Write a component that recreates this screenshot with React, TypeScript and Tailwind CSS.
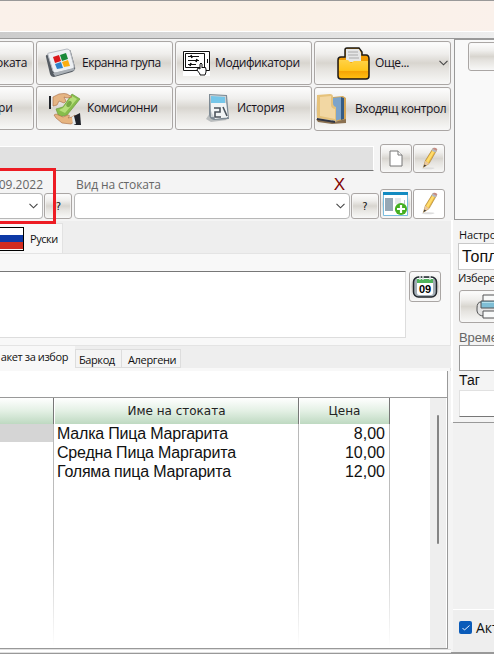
import type { ReactNode } from 'react';

const steel = 'border border-[#aaa6a4] rounded-[3px] bg-[linear-gradient(180deg,#fdfdfd_0%,#efeeec_28%,#d8d5cf_50%,#e5e3df_65%,#f8f8f7_100%)] shadow-[inset_0_0_0_1px_#f8f8f8aa]';

function ToolButton({ children, className = '' }: { children?: ReactNode; className?: string }) {
  return (
    <button className={`${steel} flex h-11 shrink-0 items-center whitespace-nowrap text-left font-['Open_Sans','Noto_Sans',sans-serif] text-[12px] text-[#17121c] ${className}`}>
      {children}
    </button>
  );
}

function SmallButton({ children, className = '' }: { children?: ReactNode; className?: string }) {
  return <button className={`${steel} flex shrink-0 items-center justify-center ${className}`}>{children}</button>;
}

function Chevron() {
  return (
    <svg width="9" height="6" viewBox="0 0 9 6" fill="none" stroke="#444" strokeWidth="1.1">
      <path d="M.5 .8 4.5 4.8 8.5 .8" />
    </svg>
  );
}

function TilesIcon() {
  return (
    <svg width="31" height="31" viewBox="0 0 31 31">
      <path d="M1 9 5 26q1 3 4 3l18-5q4-2 3-5L26 4q0-3-4-2L4 6Q0 7 1 9" fill="#555b62" />
      <path d="M3 7 8 23q1 2 3 2l16-4q3-1 2-3L25 3q-1-2-3-2L4 5Q2 5 3 7" fill="#edf0f3" stroke="#b6bac1" />
      <path d="m8 9 6-2 2 6-6 2Z" fill="#db171b" />
      <path d="m15 7 6-2 2 6-6 2Z" fill="#198939" />
      <path d="m10 16 6-2 2 6-6 1Z" fill="#2e82c9" />
      <path d="m17 14 6-2 2 6-6 1Z" fill="#fbae10" />
      <path d="M8 25 29 20l1 2-20 6" fill="#aab0b6" />
    </svg>
  );
}

function MoneyIcon() {
  return (
    <svg width="33" height="33" viewBox="0 0 33 33">
      <path d="m8 17 7-2 9-13 8 5-13 16-8 2Z" fill="#88bd4c" stroke="#6b9b39" strokeWidth=".7" />
      <path d="m11 18 4-2 9-12 5 3-12 14Z" fill="#b6de7a" />
      <ellipse cx="21" cy="12" rx="2.2" ry="3.4" fill="#78a845" transform="rotate(35 21 12)" />
      <path d="M1 4h2v13H1z" fill="#202329" />
      <path d="M3 5h2v10H3z" fill="#e5e9eb" />
      <path d="m5 5 6-3q6-1 8 0l5 3-5 1-3-1 2 4-2 2-5-2-2 4-4 1Z" fill="#e5b584" stroke="#a76a40" strokeWidth=".6" />
      <path d="m6 23 2-1 7 3 5-2q3 0 0 3l4-1 3-2 2 5-6 4-9-1-6-5Z" fill="#e6b480" stroke="#a76a40" strokeWidth=".6" />
      <path d="m26 24 6-3 1 12h-7Z" fill="#20232a" />
      <path d="m24 25 2-1 2 8-3 1Z" fill="#e5ebee" />
    </svg>
  );
}

function ModifierIcon() {
  return (
    <svg width="27" height="27" viewBox="0 0 27 27" fill="none" stroke="#111" strokeWidth="1">
      <path d="M0 0h27v26H0z" fill="#fff" stroke="none" />
      <path d="M.5 1.5h26v19H.5zM2.5 3.5h19v14h-19zM5 6.5h11M5 10.5h11M5 14.5h8M24.5 9v4" />
      <path d="m8 5 1 3m5 1-1 3m-5 1-1 3" strokeWidth="1.6" />
      <path d="m17 24-3-4 1-2 2 1v-5q1-2 2 0v4l1-1 1 1 1-1 1 2v3l-1 3h-5Z" fill="#fff" />
    </svg>
  );
}

function HistoryIcon() {
  return (
    <svg width="28" height="30" viewBox="0 0 28 30">
      <path d="m1 26 6-9 15 10-16 2Z" fill="#babdbe" />
      <path d="m4 1 18 1 2 24-15 1Q4 26 4 21Z" fill="#7d8a94" />
      <path d="m5 2 16 1 1 22-16-1Z" fill="#cbd1d4" />
      <path d="m6 3 14 1v6H6Z" fill="#75c6e9" />
      <path d="M6 10h15l2 14-13 2-4-8Z" fill="#f1f4f5" />
      <path d="M9 15h6v4h-5v5h6m2-10 4 9" fill="none" stroke="#4b535c" strokeWidth="1.6" />
    </svg>
  );
}

function FolderIcon() {
  return (
    <svg width="33" height="33" viewBox="0 0 33 33">
      <defs><linearGradient id="folderFront" x2="0" y2="1"><stop stopColor="#ffd247" /><stop offset=".58" stopColor="#ffc51c" /><stop offset=".62" stopColor="#f6a404" /><stop offset="1" stopColor="#ffbd11" /></linearGradient></defs>
      <path d="M1 29V13q0-3 3-3h4V3q0-2 2-2h12l3 4v3h4q3 0 3 4v17q0 3-3 3H4q-3 0-3-3Z" fill="#f19b00" stroke="#1c1a17" strokeWidth="1.5" />
      <path d="M9 2h13l2 4v9H9Z" fill="#e5e6e6" />
      <path d="M11 5h10M11 8h10M12 11h10" stroke="#aaa" />
      <path d="M2 13h9l3 3 3-2h14v15q0 2-3 2H5q-3 0-3-3Z" fill="url(#folderFront)" />
    </svg>
  );
}

function BooksIcon() {
  return (
    <svg width="32" height="32" viewBox="0 0 32 32">
      <path d="m17 4 10-1 3 2v22L17 29Z" fill="#d4a657" />
      <path d="m16 5 9-1v22l-9 3Z" fill="#7da4ca" />
      <path d="m25 4 3 1v21l-3 1Z" fill="#345c85" />
      <path d="M0 26 18 29l12-3v4l-14 1-14-2Z" fill="#8b7151" />
      <path d="m1 2 13-1q3 0 3 3v6q0 3 3 4v14L1 25Z" fill="#e6c27b" />
      <path d="m4 4 11-1v9q0 3 4 4v10L4 23Z" fill="#f6ddb0" opacity=".75" />
      <path d="m1 25 18 3v2L1 27Z" fill="#303543" />
    </svg>
  );
}

function PencilIcon() {
  return (
    <svg width="24" height="24" viewBox="0 0 26 26">
      <ellipse cx="12" cy="23" rx="7" ry="1" fill="#ddd" />
      <path d="m7 22 2-7 8-13 4 2-8 14Z" fill="#edbd43" stroke="#a67e36" strokeWidth=".7" />
      <path d="m10 15 8-13 2 1-8 14Z" fill="#ffdc6c" />
      <path d="m7 22 2-7 4 3Z" fill="#eac8a0" />
      <path d="m7 22 1-3 2 1Z" fill="#333" />
      <path d="m16 4 1-3q3-1 5 2l-2 3Z" fill="#b4bac2" />
      <path d="m17 2 1-1q3-1 4 2l-1 1Z" fill="#c78b81" />
    </svg>
  );
}

function FormPlusIcon() {
  return (
    <svg width="26" height="25" viewBox="0 0 26 25">
      <path d="M.5.5h24v23H.5z" fill="#fff" stroke="#79bddf" />
      <path d="M0 0h25v3H0z" fill="#138bc1" />
      <path d="M2 6h8v13H2z" fill="#96a8b5" />
      <path d="M12 6h6v6h-6z" fill="#e6e9eb" />
      <path d="M21 8h1v4h-1z" fill="#b8c3c8" />
      <circle cx="18" cy="17" r="6.1" fill="#45af21" />
      <path d="M18 13v8m-4-4h8" stroke="#fff" strokeWidth="2.2" />
    </svg>
  );
}

function CalendarIcon() {
  return (
    <div className="relative h-[24px] w-[26px]">
      <svg className="absolute inset-0" width="26" height="24" viewBox="0 0 26 24">
        <rect x="1.5" y="2" width="23" height="20" rx="5" fill="#a4afb6" stroke="#20262b" strokeWidth="1.5" />
        <path d="M5 3h16v15q0 2-2 2H7q-2 0-2-2Z" fill="#fff" />
        <path d="M5 4h16v4H5z" fill="#50b45c" />
        <path d="M8 1v4m3-4v4m7-4v4" stroke="#d8e1dd" strokeWidth="1.5" />
      </svg>
      <span className="absolute left-[7px] top-[9px] font-['Liberation_Sans',sans-serif] text-[11px] font-bold leading-[10px] text-black">09</span>
    </div>
  );
}

function PrinterIcon() {
  return (
    <svg className="shrink-0" width="32" height="26" viewBox="0 0 32 26" fill="#f9fafa" stroke="#525354" strokeWidth="1">
      <path d="M5 8Q1 8 1 14v3q1 5 7 5h17l4-4V8Z" fill="#e3e3e3" />
      <path d="M7 1h17v8H7z" />
      <path d="M5 7h22v7H5z" fill="#7fbed5" />
      <path d="M6 8h20v1H6z" fill="#b4dfeb" stroke="none" />
      <path d="M7 17h18v7H7z" />
    </svg>
  );
}

const products = [
  ['Малка Пица Маргарита', '8,00'],
  ['Средна Пица Маргарита', '10,00'],
  ['Голяма пица Маргарита', '12,00'],
];

const headerStyle = "h-[26px] shrink-0 border-r border-[#777] bg-[linear-gradient(180deg,#fff_0%,#e3f0e4_50%,#bed9c1_100%)] text-center font-['DejaVu_Sans',sans-serif] text-[12px] leading-[27px] text-[#222]";

function FadeLine() {
  return <div className="ml-auto h-full w-px shrink-0 bg-[linear-gradient(180deg,#b9b9b9_0%,#bdbdbd_50%,#fff_100%)]" />;
}

function Toolbar() {
  return (
    <div className="flex h-[92px] gap-0.5 pt-0.5">
      <div className="flex w-[34px] shrink-0 flex-col gap-px overflow-hidden">
        <ToolButton className="-ml-4 w-[50px] justify-end pr-[6px] tracking-[-.3px]">оката</ToolButton>
        <ToolButton className="-ml-4 w-[50px] justify-end pr-[20px]">ри</ToolButton>
      </div>
      <div className="flex w-[137px] shrink-0 flex-col gap-px">
        <ToolButton className="w-full pl-[8px]"><TilesIcon /><span className="ml-[6px] tracking-[-.45px]">Екранна група</span></ToolButton>
        <ToolButton className="w-full pl-[11px]"><MoneyIcon /><span className="ml-[6px] tracking-[-.4px]">Комисионни</span></ToolButton>
      </div>
      <div className="flex w-[137px] shrink-0 flex-col gap-px">
        <ToolButton className="w-full pl-[7px]"><ModifierIcon /><span className="ml-[5px] tracking-[-.4px]">Модификатори</span></ToolButton>
        <ToolButton className="w-full pl-[29px]"><HistoryIcon /><span className="ml-[4px] tracking-[-.3px]">История</span></ToolButton>
      </div>
      <div className="flex w-[137px] shrink-0 flex-col gap-0.5">
        <ToolButton className="w-full pl-[22px]"><FolderIcon /><span className="ml-[5px] flex-1 tracking-[-.4px]">Още...</span><span className="mr-[2px]"><Chevron /></span></ToolButton>
        <ToolButton className="w-full pl-[1px]"><BooksIcon /><span className="ml-[7px] tracking-[-.4px]">Входящ контрол</span></ToolButton>
      </div>
    </div>
  );
}

function ProductFields() {
  return (
    <div className="flex h-[90px] flex-col bg-[#f4f4f4] pt-[13px]">
      <div className="flex h-[30px] shrink-0">
        <div className="mt-[2px] h-[25px] w-[374px] border-y border-r border-b-[#777] border-r-white border-t-white bg-[#e1e1e1]" />
        <SmallButton className="ml-[6px] h-[29px] w-8">
          <svg width="14" height="17" viewBox="0 0 14 17" fill="#fff" stroke="#777"><path d="M1 1h8l4 4v11H1Z" /><path d="M9 1v4h4" /></svg>
        </SmallButton>
        <SmallButton className="ml-px h-[29px] w-8"><PencilIcon /></SmallButton>
      </div>
      <div className="flex h-[47px]">
        <div className="w-[73px] shrink-0">
          <div className="flex h-[19px] w-[43px] justify-end overflow-hidden font-['Open_Sans','Noto_Sans',sans-serif] text-[12px] leading-[21px] text-[#666]">09.2022</div>
          <div className="flex">
            <div className="flex h-[26px] w-[43px] items-center justify-end rounded-r-sm border border-l-0 border-[#b7b7b7] bg-white pr-1"><Chevron /></div>
            <SmallButton className="ml-px h-[26px] w-7"><span className="pl-px font-['DejaVu_Sans',sans-serif] text-[10px]">?</span></SmallButton>
          </div>
        </div>
        <div className="w-[278px] shrink-0 pl-px">
          <div className="flex h-[19px] justify-between pl-0.5 font-['Open_Sans','Noto_Sans',sans-serif] text-[12px] leading-[21px] tracking-[-.12px] text-[#666]">
            Вид на стоката<span className="mr-[6px] font-['Liberation_Sans',sans-serif] text-[17px] leading-[21px] text-[#800000]">X</span>
          </div>
          <div className="flex h-[26px] w-[276px] items-center justify-end rounded-sm border border-[#b7b7b7] bg-white pr-1"><Chevron /></div>
        </div>
        <SmallButton className="mt-[19px] h-[26px] w-7"><span className="font-['DejaVu_Sans',sans-serif] text-[10px]">?</span></SmallButton>
        <SmallButton className="ml-px mt-[15px] h-[30px] w-8"><FormPlusIcon /></SmallButton>
        <button className="ml-px mt-[15px] flex h-[30px] w-8 items-center justify-center rounded-[3px] border border-[#aaa6a4] bg-white"><PencilIcon /></button>
      </div>
    </div>
  );
}

function ProductTable() {
  return (
    <div className="mr-[3px] h-[278px] border-r border-b border-[#999] bg-white">
      <div className="h-[27px] border-b border-[#999]" />
      <div className="flex h-[250px]">
        <div className="w-[54px] shrink-0">
          <div className={`${headerStyle} w-[54px]`} />
          <div className="flex h-[223px]"><div className="h-[18px] w-[53px] bg-[#d5d5d5]" /><FadeLine /></div>
        </div>
        <div className="w-[245px] shrink-0">
          <div className={`${headerStyle} w-[245px] border-l border-l-white`}>Име на стоката</div>
          <div className="flex h-[223px] pl-[3px]">
            <div className="whitespace-nowrap font-['Liberation_Sans',sans-serif] text-[16px] leading-[19px] tracking-[-.2px]">{products.map(([name]) => <div key={name}>{name}</div>)}</div><FadeLine />
          </div>
        </div>
        <div className="w-[91px] shrink-0">
          <div className={`${headerStyle} w-[91px] border-l border-l-white`}>Цена</div>
          <div className="flex h-[223px]">
            <div className="w-[86px] text-right font-['Liberation_Sans',sans-serif] text-[16px] leading-[19px]">{products.map(([name, price]) => <div key={name}>{price}</div>)}</div><FadeLine />
          </div>
        </div>
        <div className="ml-auto mr-px w-4 bg-[#eee]"><div className="ml-[7px] mt-[17px] h-[129px] w-[2px] rounded-full bg-[#858585]" /></div>
      </div>
    </div>
  );
}

function MainPanel() {
  return (
    <main className="flex w-[451px] shrink-0 flex-col">
      <Toolbar />
      <ProductFields />
      <div className="flex h-8 bg-[#eee] pt-0.5">
        <div className="flex h-[30px] w-[63px] items-center border-r border-t border-[#e2e2e2] bg-[#f8f8f8]">
          <div className="flex h-6 w-6 flex-col border border-l-0 border-black"><i className="flex-1 bg-white" /><i className="flex-1 bg-[#0d39a6]" /><i className="flex-1 bg-[#d02b20]" /></div>
          <span className="ml-[6px] mt-[2px] font-['Open_Sans','Noto_Sans',sans-serif] text-[11px] tracking-[-.45px]">Руски</span>
        </div>
      </div>
      <div className="flex h-[93px] border-y border-r border-[#e4e4e4] bg-[#f8f8f8] pt-[17px]">
        <div className="h-[67px] w-[406px] border border-l-0 border-t-[#777] border-[#ddd] bg-white" />
        <SmallButton className="ml-[3px] h-[31px] w-8"><CalendarIcon /></SmallButton>
      </div>
      <div className="flex h-[22px] items-end bg-[#eee] font-['Open_Sans','Noto_Sans',sans-serif] text-[11px]">
        <div className="h-[22px] w-[75px] overflow-hidden bg-[#f8f8f8] pr-[7px] text-right leading-[21px]"><span className="float-right whitespace-nowrap tracking-[-.4px]">акет за избор</span></div>
        <div className="h-[19px] w-[47px] border border-[#ddd] bg-[#f4f4f4] pl-[3px] leading-[19px] tracking-[-.4px]">Баркод</div>
        <div className="h-[19px] w-[59px] border border-l-0 border-[#ddd] bg-[#f4f4f4] pl-[6px] leading-[19px] tracking-[-.35px]">Алергени</div>
      </div>
      <div className="h-[3px] shrink-0 border-r border-[#ddd] bg-[#f8f8f8]" />
      <ProductTable />
      <div className="h-1 border-y border-[#e1e1e1] bg-white" />
      <div className="h-px bg-[#999]" />
    </main>
  );
}

function SettingsPanel() {
  return (
    <aside className="flex h-[615px] w-[43px] shrink-0 flex-col overflow-hidden bg-[#f4f4f4]">
      <div className="ml-[3px] h-[181px] shrink-0 border-b border-l border-t border-[#999] bg-[#f9f9f9] pl-[13px] pt-[2px]">
        <SmallButton className="h-[29px] w-[70px]" />
      </div>
      <div className="h-[202px] shrink-0 border-l-2 border-white pl-[5px]">
        <div className="h-[23px] whitespace-nowrap pl-px pt-[5px] font-['Open_Sans','Noto_Sans',sans-serif] text-[11px] leading-[20px] tracking-[-.15px]">Настройки</div>
        <div className="h-[27px] w-[90px] border border-[#c8c8c8] bg-white pl-[3px] font-['Liberation_Sans',sans-serif] text-[16px] leading-[25px]">Топли</div>
        <div className="h-[20px] whitespace-nowrap font-['Open_Sans','Noto_Sans',sans-serif] text-[11px] leading-[16px] tracking-[-.3px]">Изберете</div>
        <SmallButton className="ml-px h-[33px] w-[70px] !justify-start pl-[16px]"><PrinterIcon /></SmallButton>
        <div className="h-[22px] whitespace-nowrap pl-px font-['Liberation_Sans',sans-serif] text-[13px] leading-[30px] tracking-[-.1px] text-[#666]">Време</div>
        <div className="ml-px h-[26px] w-[90px] border border-[#999] bg-white" />
        <div className="h-[19px] pl-px font-['Liberation_Sans',sans-serif] text-[14px] leading-[18px]">Таг</div>
        <div className="ml-px h-[27px] w-[90px] border border-[#e1e1e1] border-b-[#777] bg-white" />
      </div>
      <div className="ml-0.5 h-[188px] shrink-0 border-b border-t border-b-white border-t-[#999] bg-[#f1f1f1]" />
      <div className="ml-0.5 flex h-[42px] shrink-0 items-start bg-[#eee] pl-[6px] pt-[11px]">
        <div className="flex h-[13px] w-[13px] shrink-0 items-center justify-center rounded-[2px] bg-[#0a5bb9]">
          <svg width="8" height="6" viewBox="0 0 8 6" fill="none" stroke="#e9f3ff"><path d="m.5 3 2 2 5-4.5" /></svg>
        </div>
        <span className="ml-1 whitespace-nowrap font-['Open_Sans','Noto_Sans',sans-serif] text-[14px] leading-[14px]">Активен</span>
      </div>
      <div className="h-0.5 bg-[#999]" />
    </aside>
  );
}

export default function App() {
  return (
    <div className="relative h-[654px] w-[494px] overflow-hidden bg-[#f4f4f4] text-[#111]">
      <header className="h-[39px]">
        <div className="h-px bg-[#999]" />
        <div className="h-[30px] bg-[linear-gradient(90deg,#faf1ea_0%,#faf1e6_55%,#faf1eb_100%)]" />
        <div className="h-px bg-white" />
        <div className="h-[6px] bg-[linear-gradient(90deg,#ccc,#eee)]" />
        <div className="h-px bg-[#999]" />
      </header>
      <div className="flex h-[615px]"><MainPanel /><SettingsPanel /></div>
      <div className="pointer-events-none absolute -left-2 top-[168px] h-14 w-16 border-[3px] border-[#ed1c24]" />
    </div>
  );
}
